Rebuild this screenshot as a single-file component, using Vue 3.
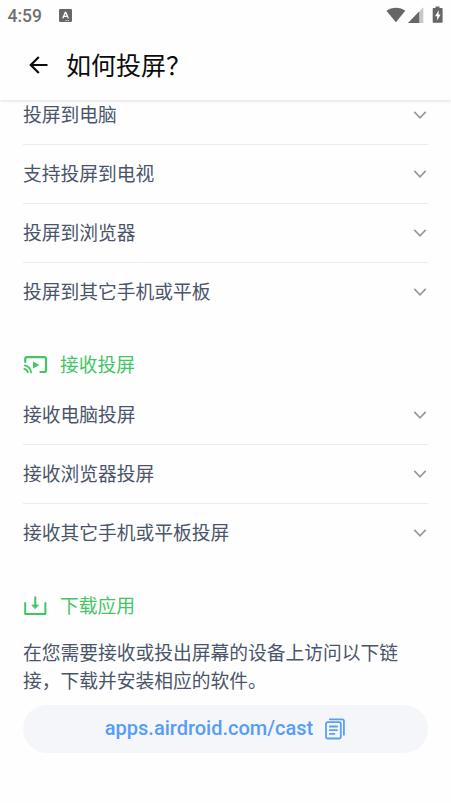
<script setup>
const castTo = ['投屏到电脑', '支持投屏到电视', '投屏到浏览器', '投屏到其它手机或平板']
const receive = ['接收电脑投屏', '接收浏览器投屏', '接收其它手机或平板投屏']
</script>

<template>
  <div class="screen">
    <div class="status">
      <span class="time">4:59</span>
      <svg class="badge" width="13" height="13" viewBox="0 0 13 13">
        <rect width="13" height="13" rx="1.3" fill="#686868" />
        <path d="M3.8 9.3 6.3 3.4h.5L9.3 9.3M4.8 7.4h3.5" fill="none" stroke="#fff" stroke-width="1.35" />
        <path d="M6.5 11.5h1.2M8.7 11.5h1.2" stroke="#fff" stroke-width=".8" />
      </svg>
      <svg class="signals" width="58" height="18" viewBox="0 0 58 18">
        <path d="M.4 4.8C6 .8 14 .8 19.3 4.8L9.9 16.2Z" fill="#666" />
        <path d="M37.3 1.2V17H22Z" fill="#c9c9c9" />
        <path d="M33.2 5.5V17H22Z" fill="#666" />
        <path d="M49.5 .6h4v1.4h2.1c.6 0 1 .4 1 1v12.8c0 .6-.4 1-1 1h-7.9c-.6 0-1-.4-1-1V3c0-.6.4-1 1-1h1.8Z" fill="#666" />
        <path d="M52.8 4.2 49 10.2h2.2v4.4l3.4-6.1h-2Z" fill="#fff" />
      </svg>
    </div>
    <header class="bar">
      <svg class="back" width="20" height="20" viewBox="0 0 20 20" fill="none" stroke="#0c0c0c" stroke-width="2.2">
        <path d="M19.5 10H3.200M10.800 2 2.800 10l8 8" />
      </svg>
      <h1>如何投屏？</h1>
    </header>
    <main>
      <ul class="list first">
        <li v-for="item in castTo" :key="item">
          <span>{{ item }}</span>
          <svg width="14" height="10" viewBox="0 0 14 10"><path d="M1.3 1.8 7 7.8l5.7-6" /></svg>
        </li>
      </ul>
      <h2>
        <svg width="25" height="20" viewBox="0 0 25 20" fill="none" stroke="#43c565" stroke-width="2.2" stroke-linecap="round">
          <path d="M2.2 7V4c0-1.2.6-1.8 1.8-1.8h17.2c1.2 0 1.8.6 1.8 1.8v11.2c0 1.2-.6 1.8-1.8 1.8h-3.7" />
          <path d="M10 6.5v7l6.4-3.5Z" fill="#43c565" stroke="none" />
          <path d="M1.6 10.3c3.5.6 6 3.3 6.5 7.1M1.3 13.8c1.9.4 3.2 1.7 3.5 3.6" stroke-width="1.8" />
        </svg>
        <span>接收投屏</span>
      </h2>
      <ul class="list">
        <li v-for="item in receive" :key="item">
          <span>{{ item }}</span>
          <svg width="14" height="10" viewBox="0 0 14 10"><path d="M1.3 1.8 7 7.8l5.7-6" /></svg>
        </li>
      </ul>
      <h2>
        <svg width="25" height="20" viewBox="0 0 25 20" fill="none" stroke="#43c565" stroke-width="2" stroke-linecap="round" stroke-linejoin="round">
          <path d="M2.2 7v10.9h20.2V7M12.3 1.2V10" />
          <path d="M9.3 9.1h6l-3 3.3Z" fill="#43c565" stroke-width="1" />
        </svg>
        <span>下载应用</span>
      </h2>
      <p>在您需要接收或投出屏幕的设备上访问以下链接，下载并安装相应的软件。</p>
      <div class="link">
        <span>apps.airdroid.com/cast</span>
        <svg width="20" height="22" viewBox="0 0 20 22" fill="none" stroke="#5a9ff8" stroke-width="1.8" stroke-linecap="round">
          <rect x="1" y="4.2" width="14.8" height="16.3" rx="1.5" />
          <path d="M4.8 1.3h12.400c1.200 0 1.700.5 1.700 1.700v13.800M4.800 8.500h7.300M4.800 12.200h7.300M4.800 15.900h4.600" />
        </svg>
      </div>
    </main>
  </div>
</template>

<style>
body { margin: 0; background: #fefefe; }
</style>
<style scoped>
.screen {
  width: 451px;
  height: 803px;
  overflow: hidden;
  display: flex;
  flex-direction: column;
  background: #fefefe;
  color: #4b556a;
  font-family: "Noto Sans CJK SC", sans-serif;
}
.status {
  height: 32px;
  box-sizing: border-box;
  padding: 0 7px 2px 7.5px;
  display: flex;
  align-items: center;
}
.time {
  font: 500 17.5px/30px Roboto, sans-serif;
  color: #707070;
  padding-top: 2px;
}
.badge { margin-left: 17px; }
.signals { margin-left: auto; }
.bar {
  height: 68px;
  flex: none;
  box-sizing: border-box;
  padding: 0 28px 3px;
  display: flex;
  align-items: center;
  gap: 18px;
  box-shadow: 0 1px 3px rgba(0, 0, 0, .13);
  clip-path: inset(0 0 -5px 0);
  position: relative;
  background: #fefefe;
}
h1 {
  margin: 0;
  padding-bottom: 2px;
  font-size: 25px;
  line-height: 36px;
  font-weight: 400;
  color: #0c0c0c;
}
main { flex: 1; padding: 0 23px; overflow: hidden; }
.list { margin: 0; padding: 0; list-style: none; }
.first { margin-top: -14px; }
li {
  height: 59px;
  box-sizing: border-box;
  border-bottom: 1px solid #ebebed;
  display: flex;
  align-items: center;
  justify-content: space-between;
  font-size: 18.75px;
  line-height: 28px;
}
li span { padding-bottom: 3px; }
h2 span { padding-bottom: 1px; }
li:last-child { border-color: transparent; }
li svg {
  margin-right: 1.5px;
  fill: none;
  stroke: #959aa1;
  stroke-width: 1.7;
}
h2 {
  margin: 0;
  height: 64px;
  box-sizing: border-box;
  padding-top: 20px;
  display: flex;
  align-items: center;
  gap: 12px;
  color: #43c565;
  font-size: 18.75px;
  line-height: 28px;
  font-weight: 400;
}
h2 svg { margin-top: 2px; }
p { margin: 11px 0; font-size: 18.75px; line-height: 28px; }
.link {
  height: 48px;
  border-radius: 24px;
  background: #f4f6fa;
  display: flex;
  align-items: center;
  justify-content: center;
  gap: 12px;
  color: #579cf8;
  font: 500 20px/28px Roboto, sans-serif;
}
.link span { padding-bottom: 2px; }
.link svg { margin-right: 1px; }
</style>
